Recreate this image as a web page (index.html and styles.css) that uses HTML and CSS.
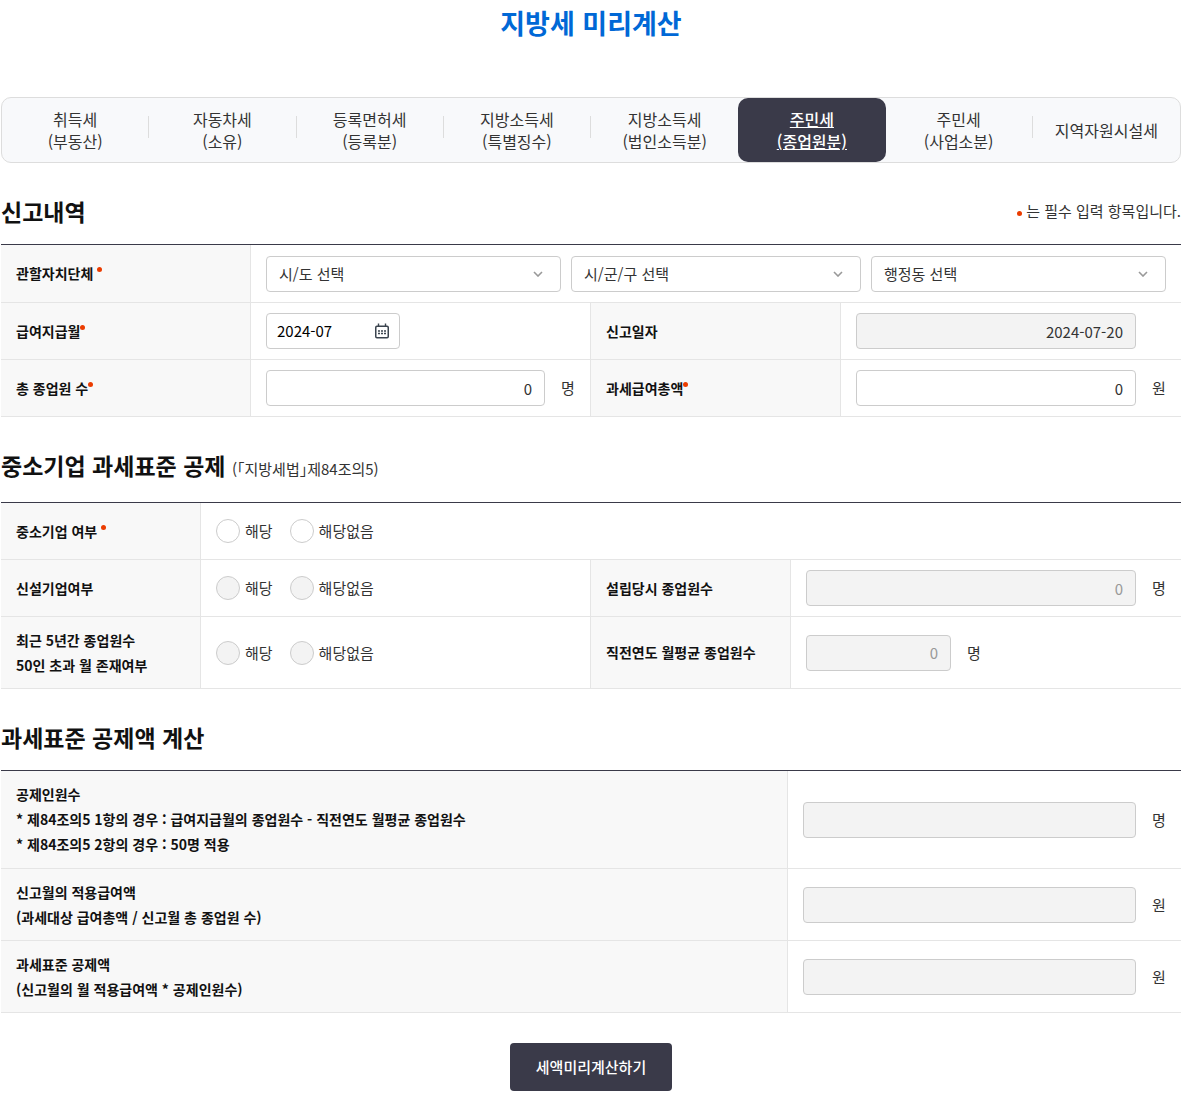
FILE: index.html
```html
<!DOCTYPE html>
<html lang="ko">
<head>
<meta charset="utf-8">
<meta name="viewport" content="width=device-width, initial-scale=1">
<title>지방세 미리계산</title>
<link rel="stylesheet" href="styles.css">
</head>
<body>
<main class="page">
  <h1 class="page-title">지방세 미리계산</h1>

  <nav aria-label="세목">
    <ul class="tabs">
      <li class="tab divided"><a href="#">취득세<br>(부동산)</a></li>
      <li class="tab divided"><a href="#">자동차세<br>(소유)</a></li>
      <li class="tab divided"><a href="#">등록면허세<br>(등록분)</a></li>
      <li class="tab divided"><a href="#">지방소득세<br>(특별징수)</a></li>
      <li class="tab"><a href="#">지방소득세<br>(법인소득분)</a></li>
      <li class="tab active"><a href="#" aria-current="page">주민세<br>(종업원분)</a></li>
      <li class="tab divided"><a href="#">주민세<br>(사업소분)</a></li>
      <li class="tab"><a href="#">지역자원시설세</a></li>
    </ul>
  </nav>

  <form>
    <div class="section-head">
      <h2>신고내역</h2>
      <p class="note"><span class="dot"></span>는 필수 입력 항목입니다.</p>
    </div>
    <table class="form-table">
      <colgroup><col class="w-report-label"><col><col class="w-report-label"><col></colgroup>
      <tbody>
        <tr class="select-row">
          <th scope="row">관할자치단체 <span class="dot raised"></span></th>
          <td colspan="3">
            <div class="selects">
              <div class="select">
                <select aria-label="시/도"><option>시/도 선택</option></select>
                <svg class="chevron" viewBox="0 0 10 6" aria-hidden="true"><path d="M1 1l4 4 4-4"/></svg>
              </div>
              <div class="select">
                <select aria-label="시/군/구"><option>시/군/구 선택</option></select>
                <svg class="chevron" viewBox="0 0 10 6" aria-hidden="true"><path d="M1 1l4 4 4-4"/></svg>
              </div>
              <div class="select">
                <select aria-label="행정동"><option>행정동 선택</option></select>
                <svg class="chevron" viewBox="0 0 10 6" aria-hidden="true"><path d="M1 1l4 4 4-4"/></svg>
              </div>
            </div>
          </td>
        </tr>
        <tr>
          <th scope="row"><label for="pay-month">급여지급월</label><span class="dot raised"></span></th>
          <td>
            <div class="month">
              <input type="text" id="pay-month" value="2024-07">
              <button type="button" aria-label="달력">
                <svg viewBox="0 0 16 16" aria-hidden="true">
                  <rect x="1.75" y="3.25" width="12.5" height="11.5" rx="1.2" fill="none" stroke="#3b444f" stroke-width="1.5"/>
                  <path d="M4.5 .5v3M11.5 .5v3" stroke="#3b444f" stroke-width="1.4"/>
                  <path d="M4 8h8M4 10.5h8" stroke="#3b444f" stroke-width="1.5" stroke-dasharray="2 1"/>
                </svg>
              </button>
            </div>
          </td>
          <th scope="row"><label for="report-date">신고일자</label></th>
          <td><div class="field"><input class="box" type="text" id="report-date" value="2024-07-20" readonly><span class="unit"></span></div></td>
        </tr>
        <tr>
          <th scope="row"><label for="staff">총 종업원 수</label><span class="dot raised"></span></th>
          <td><div class="field"><input class="box" type="text" id="staff" value="0"><span class="unit">명</span></div></td>
          <th scope="row"><label for="pay-total">과세급여총액</label><span class="dot raised"></span></th>
          <td><div class="field"><input class="box" type="text" id="pay-total" value="0"><span class="unit">원</span></div></td>
        </tr>
      </tbody>
    </table>

    <div class="section-head">
      <h2>중소기업 과세표준 공제 <small>(｢지방세법｣제84조의5)</small></h2>
    </div>
    <table class="form-table">
      <colgroup><col class="w-sme-label"><col><col class="w-sme-label"><col></colgroup>
      <tbody>
        <tr>
          <th scope="row">중소기업 여부 <span class="dot raised"></span></th>
          <td colspan="3">
            <div class="radios">
              <label><input type="radio" name="sme">해당</label>
              <label><input type="radio" name="sme">해당없음</label>
            </div>
          </td>
        </tr>
        <tr>
          <th scope="row">신설기업여부</th>
          <td>
            <div class="radios">
              <label><input type="radio" name="new" disabled>해당</label>
              <label><input type="radio" name="new" disabled>해당없음</label>
            </div>
          </td>
          <th scope="row"><label for="founding-staff">설립당시 종업원수</label></th>
          <td><div class="field"><input class="box" type="text" id="founding-staff" value="0" disabled><span class="unit">명</span></div></td>
        </tr>
        <tr class="two-lines">
          <th scope="row">최근 5년간 종업원수<br>50인 초과 월 존재여부</th>
          <td>
            <div class="radios">
              <label><input type="radio" name="over50" disabled>해당</label>
              <label><input type="radio" name="over50" disabled>해당없음</label>
            </div>
          </td>
          <th scope="row"><label for="last-year">직전연도 월평균 종업원수</label></th>
          <td><div class="field"><input class="box short" type="text" id="last-year" value="0" disabled><span class="unit">명</span></div></td>
        </tr>
      </tbody>
    </table>

    <div class="section-head">
      <h2>과세표준 공제액 계산</h2>
    </div>
    <table class="form-table">
      <colgroup><col class="w-calc-label"><col></colgroup>
      <tbody>
        <tr class="three-lines">
          <th scope="row"><label for="deduct-staff">공제인원수<br>* 제84조의5 1항의 경우 : 급여지급월의 종업원수 - 직전연도 월평균 종업원수<br>* 제84조의5 2항의 경우 : 50명 적용</label></th>
          <td><div class="field"><input class="box" type="text" id="deduct-staff" readonly><span class="unit">명</span></div></td>
        </tr>
        <tr class="two-lines">
          <th scope="row"><label for="applied-pay">신고월의 적용급여액<br>(과세대상 급여총액 / 신고월 총 종업원 수)</label></th>
          <td><div class="field"><input class="box" type="text" id="applied-pay" readonly><span class="unit">원</span></div></td>
        </tr>
        <tr class="two-lines">
          <th scope="row"><label for="deduction">과세표준 공제액<br>(신고월의 월 적용급여액 * 공제인원수)</label></th>
          <td><div class="field"><input class="box" type="text" id="deduction" readonly><span class="unit">원</span></div></td>
        </tr>
      </tbody>
    </table>

    <div class="actions"><button type="button" class="submit">세액미리계산하기</button></div>
  </form>
</main>
</body>
</html>
```
FILE: styles.css
```css
* {
  box-sizing: border-box;
}

body {
  margin: 0;
  background: #fff;
  color: #333;
  font: 15px/22px "Noto Sans CJK KR", "Noto Sans", sans-serif;
}

input,
select,
button {
  margin: 0;
  font: inherit;
  color: inherit;
}

.page {
  margin: 0 21px 0 1px;
  padding: 3px 0 7px;
}

.page-title {
  margin: 0 0 54px;
  color: #0068d6;
  font-size: 27px;
  line-height: 40px;
  text-align: center;
}

/* Tabs */
.tabs {
  display: flex;
  margin: 0;
  padding: 0;
  list-style: none;
  background: #f8f9fb;
  border: 1px solid #ddd;
  border-radius: 10px;
}

.tab {
  flex: 1 1 0;
  display: flex;
  align-items: center;
  min-height: 64px;
  font-size: 16px;
  text-align: center;
}

.tab a {
  flex: 1;
  color: inherit;
  text-decoration: none;
}

.divided::after {
  content: "";
  width: 1px;
  height: 22px;
  margin-bottom: 6px;
  background: #ddd;
}

.active {
  border-radius: 10px;
  background: #3a3a49;
  color: #fff;
  font-weight: 500;
}

.active a {
  text-decoration: underline;
}

/* Section headings */
.section-head {
  display: flex;
  align-items: center;
  justify-content: space-between;
  padding: 30px 0 15px;
}

h2 {
  margin: 0;
  color: #111;
  font-size: 23px;
  line-height: 36px;
}

h2 small {
  color: #333;
  font-size: 15px;
  font-weight: 400;
}

.note {
  margin: 0;
}

.dot {
  display: inline-block;
  width: 5px;
  height: 5px;
  margin-right: 4px;
  border-radius: 50%;
  background: #eb3c00;
  vertical-align: 1px;
}

.raised {
  margin-right: 0;
  vertical-align: 7px;
}

/* Form tables */
.form-table {
  width: 100%;
  table-layout: fixed;
  border-collapse: separate;
  border-spacing: 0;
  border-top: 1px solid #3a3a49;
}

.w-report-label {
  width: 250px;
}

.w-sme-label {
  width: 200px;
}

.w-calc-label {
  width: 66.7%;
}

th,
td {
  height: 57px;
  padding: 10px 15px;
  border-bottom: 1px solid #e5e5e5;
  border-right: 1px solid #e5e5e5;
}

td:last-child {
  border-right: 0;
}

th {
  background: #f8f8f8;
  color: #111;
  font-size: 14px;
  line-height: 25px;
  text-align: left;
}

.select-row > * {
  height: 58px;
}

.two-lines > * {
  height: 72px;
}

.three-lines > * {
  height: 98px;
}

/* Controls */
.box,
.select select,
.month {
  height: 36px;
  border: 1px solid #ccc;
  border-radius: 4px;
  background: #fff;
}

.field {
  display: flex;
  align-items: center;
  gap: 16px;
}

.box {
  flex: 1;
  min-width: 0;
  padding: 0 12px;
  text-align: right;
}

.box:read-only {
  background: #f3f3f3;
}

.box:disabled {
  color: #999;
}

.short {
  flex: 0 1 145px;
}

.unit {
  width: 14px;
}

.selects {
  display: grid;
  grid-template-columns: 59fr 58fr 59fr;
  gap: 10px;
}

.select {
  display: grid;
  align-items: center;
}

.select > * {
  grid-area: 1 / 1;
}

.select select {
  appearance: none;
  width: 100%;
  padding: 0 36px 0 12px;
}

.chevron {
  justify-self: end;
  width: 10px;
  height: 6px;
  margin-right: 18px;
  fill: none;
  stroke: #999;
  stroke-width: 1.6;
  pointer-events: none;
}

.month {
  display: flex;
  align-items: center;
  width: 134px;
  padding: 0 9px 0 10px;
  color: #000;
}

.month input {
  flex: 1;
  min-width: 0;
  padding: 0;
  border: 0;
  outline: 0;
}

.month button {
  display: flex;
  padding: 0;
  border: 0;
  background: none;
}

.month svg {
  width: 16px;
  height: 16px;
}

.radios {
  display: flex;
  gap: 17px;
}

.radios label {
  display: flex;
  align-items: center;
  gap: 5px;
}

.radios input {
  appearance: none;
  width: 24px;
  height: 24px;
  border: 1px solid #ccc;
  border-radius: 50%;
  background: #fff;
}

.radios input:disabled {
  background: #f3f3f3;
}

.actions {
  display: flex;
  justify-content: center;
  padding-top: 30px;
}

.submit {
  height: 48px;
  padding: 0 26px;
  border: 0;
  border-radius: 4px;
  background: #3a3a49;
  color: #fff;
  font-weight: 500;
}
```
